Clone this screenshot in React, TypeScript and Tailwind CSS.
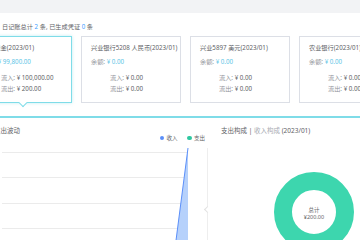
import React from 'react';

interface Account {
  name: string;
  balance: string;
  inflow: string;
  outflow: string;
}

const accounts: Account[] = [
  { name: '库存现金(2023/01)', balance: '99,800.00', inflow: '100,000.00', outflow: '200.00' },
  { name: '兴业银行5208 人民币(2023/01)', balance: '0.00', inflow: '0.00', outflow: '0.00' },
  { name: '兴业5897 美元(2023/01)', balance: '0.00', inflow: '0.00', outflow: '0.00' },
  { name: '农业银行(2023/01)', balance: '0.00', inflow: '0.00', outflow: '0.00' },
];

const AccountCard: React.FC<{ acc: Account; active?: boolean }> = ({ acc, active }) => (
  <div
    className={`relative shrink-0 w-[100px] h-[67px] border bg-white pl-[9px] pt-[7px] text-[6.2px] leading-[8px] whitespace-nowrap ${
      active ? 'border-[#7fdce8] shadow-[0_0_3px_rgba(127,220,232,0.5)]' : 'border-[#dcdfe6]'
    }`}
  >
    <div className="text-[#606266]">{acc.name}</div>
    <div className="mt-[6px] text-[#909399]">
      余额: <span className="text-[#5cc4e6]">¥ {acc.balance}</span>
    </div>
    <div className="mt-[8px] pl-[19px] text-[#909399]">
      流入: <span className="text-[#606266]">¥ {acc.inflow}</span>
    </div>
    <div className="mt-[3px] pl-[19px] text-[#909399]">
      流出: <span className="text-[#606266]">¥ {acc.outflow}</span>
    </div>
    {active && (
      <div className="absolute left-[47px] bottom-[-4px] w-[6px] h-[6px] rotate-45 bg-white border-r border-b border-[#7fdce8]" />
    )}
  </div>
);

export default function App() {
  return (
    <div className="w-[360px] h-[240px] overflow-hidden bg-white font-['Noto_Sans','Noto_Sans_CJK_SC',sans-serif]">
      {/* top strip */}
      <div className="h-[13px] bg-[#f2f3f5]" />

      {/* summary */}
      <div className="pt-[10px] pl-[2px] text-[6.2px] leading-[8px] text-[#606266] whitespace-nowrap">
        日记账总计 <span className="text-[#409eff]">2</span> 条, 已生成凭证 <span className="text-[#409eff]">0</span> 条
      </div>

      {/* account cards */}
      <div className="mt-[5px] ml-[-28px] flex gap-[9px]">
        {accounts.map((acc, i) => (
          <AccountCard key={acc.name} acc={acc} active={i === 0} />
        ))}
      </div>

      <div className="mt-[13px] h-[1.5px] bg-[#7fdce8]" />

      {/* charts */}
      <div className="flex ml-[-28px]">
        <div className="w-[235px] shrink-0 flex flex-col">
          <div className="pt-[9px] pl-[9px] text-[6.5px] leading-[8px] text-[#606266] whitespace-nowrap">收入支出波动</div>
          <div className="flex justify-end items-center pr-[2px] h-[7px] text-[5.5px] text-[#666] whitespace-nowrap">
            <span className="w-[4.5px] h-[4.5px] rounded-full bg-[#5b8ff9]" />
            <span className="ml-[2px] mr-[10px]">收入</span>
            <span className="w-[4.5px] h-[4.5px] rounded-full bg-[#2ec7a0]" />
            <span className="ml-[2px]">支出</span>
          </div>
          <svg width="235" height="98" viewBox="0 0 235 98">
            {[10, 35, 61, 86].map((y) => (
              <line key={y} x1="30" x2="216" y1={y + 0.5} y2={y + 0.5} stroke="#ebebeb" strokeWidth="1" />
            ))}
            <polygon points="202.5,110 216,6 216,98" fill="#b6d1fb" />
            <line x1="202.5" y1="110" x2="216" y2="6" stroke="#5b8ff9" strokeWidth="1" />
          </svg>
        </div>

        <div className="relative w-px shrink-0 mt-[30px] bg-[#eeeeee]">
          <div className="absolute top-[59px] left-[-2.5px] w-[5px] h-[5px] rotate-45 bg-white border-l border-b border-[#e2e2e2]" />
        </div>

        <div className="flex flex-col">
          <div className="pt-[9px] pl-[13px] text-[6.5px] leading-[8px] text-[#606266] whitespace-nowrap">
            支出构成 | <span className="text-[#a8abb2]">收入构成</span> (2023/01)
          </div>
          <svg className="mt-[37px] ml-[66px]" width="80" height="80" viewBox="0 0 80 80">
            <circle cx="40" cy="40" r="31" fill="none" stroke="#3dd6ae" strokeWidth="18" />
            <text x="40" y="39.5" textAnchor="middle" fontSize="5.5" fill="#666">总计</text>
            <text x="40" y="46.5" textAnchor="middle" fontSize="5.5" fill="#666">¥200.00</text>
          </svg>
        </div>
      </div>
    </div>
  );
}
